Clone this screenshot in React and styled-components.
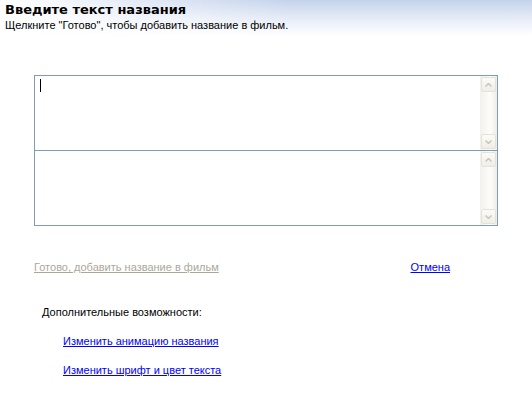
import React from "react";
import styled, { createGlobalStyle } from "styled-components";

const GlobalStyle = createGlobalStyle`
  html, body {
    margin: 0;
    padding: 0;
    background: #ffffff;
  }
  body {
    font-family: Tahoma, "Liberation Sans", Arial, sans-serif;
    font-size: 11px;
    color: #000000;
  }
`;

const Page = styled.div`
  width: 532px;
  height: 400px;
  overflow: hidden;
`;

const Header = styled.div`
  height: 36px;
  padding: 2px 5px 0;
  box-sizing: border-box;
  background:
    linear-gradient(to right, #ffffff 0%, rgba(255, 255, 255, 0) 55%),
    linear-gradient(to bottom, #c3d2ec 0%, #e2e9f6 45%, #ffffff 100%);
`;

const Title = styled.h1`
  margin: 0;
  font-family: "DejaVu Sans", Tahoma, sans-serif;
  font-size: 13px;
  font-weight: bold;
  line-height: 15px;
`;

const Subtitle = styled.div`
  margin-top: 2px;
  font-size: 11px;
  line-height: 13px;
`;

const Body = styled.div`
  padding: 39px 34px 0 34px;
`;

const Editor = styled.div`
  display: flex;
  flex-direction: column;
  border: 1px solid #7f9db9;
`;

const Field = styled.div`
  display: flex;
  height: 74px;
  border-top: ${(p) => (p.$divided ? "1px solid #7f9db9" : "none")};
`;

const TextArea = styled.div`
  flex: 1;
  padding: 3px 5px;
`;

const Caret = styled.span`
  display: block;
  width: 1px;
  height: 13px;
  background: #000000;
`;

const ScrollBar = styled.div`
  width: 17px;
  display: flex;
  flex-direction: column;
  justify-content: space-between;
  background: linear-gradient(to right, #f3f1ec, #fdfdfb 60%, #eeede5);
`;

const ScrollButton = styled.div`
  width: 15px;
  height: 15px;
  margin: 1px;
  box-sizing: border-box;
  border: 1px solid #e4e2da;
  border-radius: 2px;
  background: linear-gradient(to bottom, #fbfbf8, #efeee8);
  display: flex;
  align-items: center;
  justify-content: center;
`;

const Arrow = ({ down }) => (
  <svg width="7" height="4" viewBox="0 0 7 4">
    <path
      d={down ? "M0.5 0.5 L3.5 3.5 L6.5 0.5" : "M0.5 3.5 L3.5 0.5 L6.5 3.5"}
      fill="none"
      stroke="#c9c7ba"
      strokeWidth="1.5"
    />
  </svg>
);

const Actions = styled.div`
  display: flex;
  justify-content: space-between;
  margin-top: 35px;
  padding-right: 48px;
`;

const Link = styled.a`
  font-size: 11px;
  line-height: 13px;
  text-decoration: underline;
  color: ${(p) => (p.$disabled ? "#aca899" : "#0000ff")};
  cursor: ${(p) => (p.$disabled ? "default" : "pointer")};
`;

const More = styled.div`
  margin-top: 32px;
  padding-left: 8px;
`;

const MoreTitle = styled.div`
  line-height: 13px;
`;

const MoreList = styled.div`
  display: flex;
  flex-direction: column;
  gap: 16px;
  padding-left: 21px;
  margin-top: 16px;
`;

function Scroll() {
  return (
    <ScrollBar>
      <ScrollButton>
        <Arrow />
      </ScrollButton>
      <ScrollButton>
        <Arrow down />
      </ScrollButton>
    </ScrollBar>
  );
}

export default function App() {
  return (
    <Page>
      <GlobalStyle />
      <Header>
        <Title>Введите текст названия</Title>
        <Subtitle>Щелкните "Готово", чтобы добавить название в фильм.</Subtitle>
      </Header>
      <Body>
        <Editor>
          <Field>
            <TextArea>
              <Caret />
            </TextArea>
            <Scroll />
          </Field>
          <Field $divided>
            <TextArea />
            <Scroll />
          </Field>
        </Editor>
        <Actions>
          <Link $disabled>Готово, добавить название в фильм</Link>
          <Link href="#">Отмена</Link>
        </Actions>
        <More>
          <MoreTitle>Дополнительные возможности:</MoreTitle>
          <MoreList>
            <div>
              <Link href="#">Изменить анимацию названия</Link>
            </div>
            <div>
              <Link href="#">Изменить шрифт и цвет текста</Link>
            </div>
          </MoreList>
        </More>
      </Body>
    </Page>
  );
}
